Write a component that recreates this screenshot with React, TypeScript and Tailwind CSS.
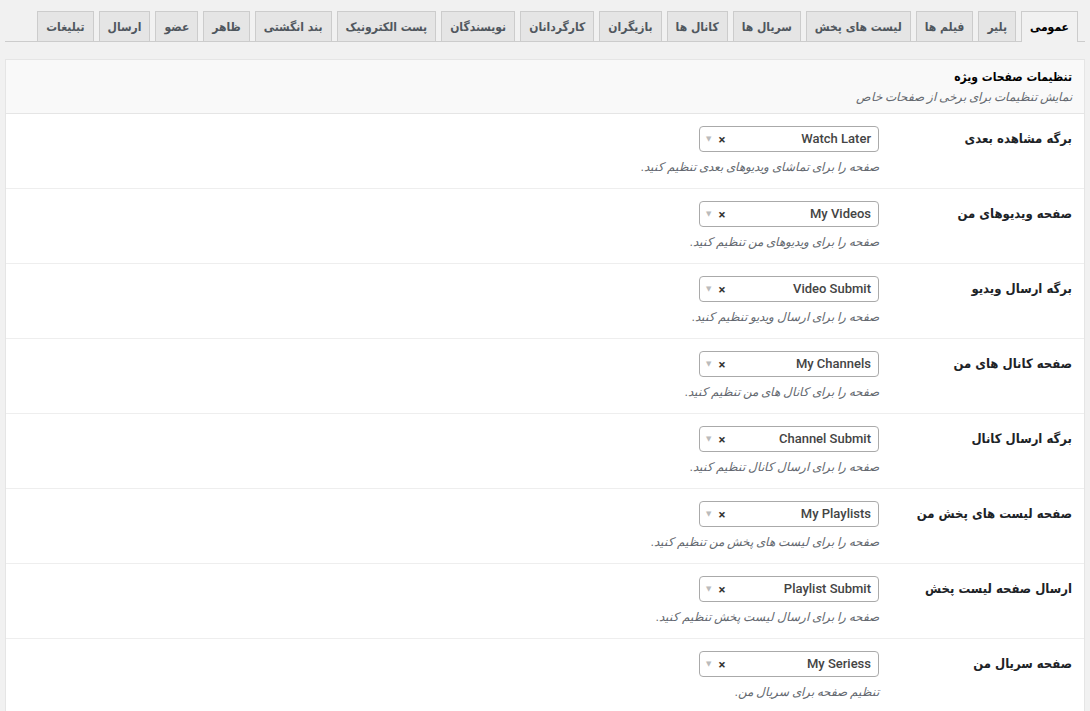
const tabs = [
  "عمومی",
  "پلیر",
  "فیلم ها",
  "لیست های پخش",
  "سریال ها",
  "کانال ها",
  "بازیگران",
  "کارگردانان",
  "نویسندگان",
  "پست الکترونیک",
  "بند انگشتی",
  "ظاهر",
  "عضو",
  "ارسال",
  "تبلیغات",
];

const rows = [
  { label: "برگه مشاهده بعدی", value: "Watch Later", desc: "صفحه را برای تماشای ویدیوهای بعدی تنظیم کنید." },
  { label: "صفحه ویدیوهای من", value: "My Videos", desc: "صفحه را برای ویدیوهای من تنظیم کنید." },
  { label: "برگه ارسال ویدیو", value: "Video Submit", desc: "صفحه را برای ارسال ویدیو تنظیم کنید." },
  { label: "صفحه کانال های من", value: "My Channels", desc: "صفحه را برای کانال های من تنظیم کنید." },
  { label: "برگه ارسال کانال", value: "Channel Submit", desc: "صفحه را برای ارسال کانال تنظیم کنید." },
  { label: "صفحه لیست های پخش من", value: "My Playlists", desc: "صفحه را برای لیست های پخش من تنظیم کنید." },
  { label: "ارسال صفحه لیست پخش", value: "Playlist Submit", desc: "صفحه را برای ارسال لیست پخش تنظیم کنید." },
  { label: "صفحه سریال من", value: "My Seriess", desc: "تنظیم صفحه برای سریال من." },
];

function PageSelect({ value }: { value: string }) {
  return (
    <div className="flex h-[26px] w-[180px] items-center justify-between rounded-[4px] border border-[#aaa] bg-white pr-[7px] pl-[6px]">
      <span className="font-['Roboto',sans-serif] text-[13px] font-medium text-[#444]" dir="ltr">
        {value}
      </span>
      <span className="flex items-center gap-[7px]" dir="ltr">
        <span className="text-[7px] leading-none text-[#bbb]">▼</span>
        <span className="text-[13px] font-bold leading-none text-[#333]">×</span>
      </span>
    </div>
  );
}

export default function App() {
  return (
    <div
      dir="rtl"
      className="min-h-screen bg-[#f1f1f1] font-['Roboto','DejaVu_Sans',sans-serif] text-[#1d2327]"
    >
      {/* tabs */}
      <div className="mx-[5px] flex gap-[5px] border-b border-[#ccc] pt-[11px] pr-[7px] font-['DejaVu_Sans_Condensed','DejaVu_Sans',sans-serif]">
        {tabs.map((t, i) => (
          <div
            key={t}
            className={
              i === 0
                ? "-mb-px flex h-[31px] items-center whitespace-nowrap border border-b-0 border-[#ccc] bg-[#f1f1f1] px-[8px] text-[12px] font-bold text-black"
                : "flex h-[30px] items-center whitespace-nowrap border border-b-0 border-[#ccc] bg-[#e5e5e5] px-[8px] text-[12px] font-bold text-[#50575e]"
            }
          >
            {t}
          </div>
        ))}
      </div>

      {/* panel */}
      <div className="mx-[5px] mt-[17px] border border-[#e5e5e5] bg-white">
        <div className="flex h-[54px] flex-col justify-center border-b border-[#e5e5e5] bg-[#f9f9f9] px-[12px]">
          <div className="font-['DejaVu_Sans_Condensed','DejaVu_Sans',sans-serif] text-[12px] font-bold text-black">
            تنظیمات صفحات ویژه
          </div>
          <div className="mt-[2px] text-[12px] italic text-[#646970]">نمایش تنظیمات برای برخی از صفحات خاص</div>
        </div>
        {rows.map((r) => (
          <div key={r.value} className="flex h-[75px] border-b border-[#eee] pt-[12px]">
            <div className="w-[205px] pr-[12px] font-['DejaVu_Sans_Condensed','DejaVu_Sans',sans-serif] text-[13px] font-bold leading-[26px] text-[#1d2327]">
              {r.label}
            </div>
            <div className="flex flex-col">
              <PageSelect value={r.value} />
              <div className="mt-[6px] text-[12px] italic text-[#646970]">{r.desc}</div>
            </div>
          </div>
        ))}
      </div>
    </div>
  );
}
